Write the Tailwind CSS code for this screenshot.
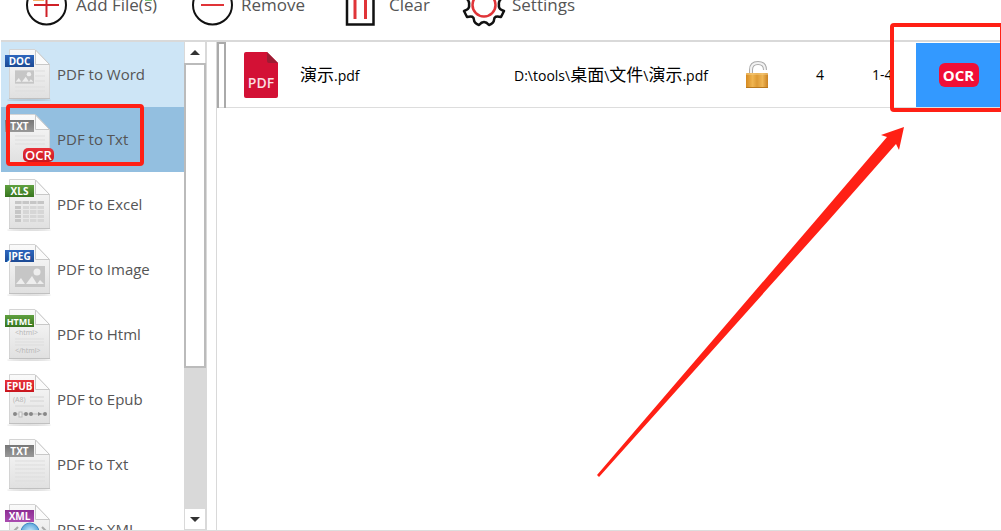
<!DOCTYPE html>
<html lang="en">
<head>
  <meta charset="UTF-8" />
  <meta name="viewport" content="width=device-width, initial-scale=1" />
  <title>PDF Converter</title>
  <script src="https://cdn.jsdelivr.net/npm/@tailwindcss/browser@4"></script>
</head>
<body class="relative h-screen overflow-hidden flex flex-col bg-white text-[#555] text-[15px] font-['Open_Sans','Noto_Sans_CJK_SC',sans-serif]">

  <!-- Shared shapes -->
  <svg class="absolute w-0 h-0" aria-hidden="true">
    <defs>
      <linearGradient id="paper" x1="0" y1="0" x2="0" y2="1"><stop offset="0" stop-color="#fafafa" /><stop offset="1" stop-color="#e0e0e0" /></linearGradient>
      <linearGradient id="blue" x1="0" y1="0" x2="0" y2="1"><stop offset="0" stop-color="#2d66bd" /><stop offset="1" stop-color="#1c4a94" /></linearGradient>
      <linearGradient id="green" x1="0" y1="0" x2="0" y2="1"><stop offset="0" stop-color="#5fa03f" /><stop offset="1" stop-color="#37751f" /></linearGradient>
      <linearGradient id="gray" x1="0" y1="0" x2="0" y2="1"><stop offset="0" stop-color="#777" /><stop offset="1" stop-color="#999" /></linearGradient>
      <linearGradient id="red" x1="0" y1="0" x2="0" y2="1"><stop offset="0" stop-color="#e8323a" /><stop offset="1" stop-color="#c9151d" /></linearGradient>
      <linearGradient id="purple" x1="0" y1="0" x2="0" y2="1"><stop offset="0" stop-color="#8c2d92" /><stop offset="1" stop-color="#ab4cb0" /></linearGradient>
      <linearGradient id="gold" x1="0" y1="0" x2="1" y2="0"><stop offset="0" stop-color="#d68a20" /><stop offset="0.3" stop-color="#f0b550" /><stop offset="0.5" stop-color="#dd9a34" /><stop offset="0.75" stop-color="#efb655" /><stop offset="1" stop-color="#c98122" /></linearGradient>
      <radialGradient id="globe"><stop offset="0" stop-color="#d4efff" /><stop offset="1" stop-color="#5ba6dc" /></radialGradient>
      <symbol id="page" viewBox="0 0 48 52">
        <ellipse cx="25" cy="51" rx="22" ry="1" fill="#000" opacity="0.12" />
        <path d="M5.500 .5H31L45.500 15.500V49.500H5.500Z" fill="url(#paper)" stroke="#d4d4d4" />
        <path d="M5 49.500H46" stroke="#c0c0c0" />
        <path d="M31.500 1V15.500H45.500Z" fill="#fbfbfb" stroke="#c8c8c8" />
      </symbol>
      <symbol id="picture" viewBox="0 0 30 21">
        <path d="M0 0H30V21H0Z" fill="#c6c6c6" />
        <circle cx="22" cy="6" r="3.500" fill="#eee" />
        <path d="M1 18L6 12L10 18ZM11 18L17 10L22 18ZM22 18L25 14L29 18Z" fill="#eee" />
      </symbol>
    </defs>
  </svg>

  <!-- Toolbar -->
  <header class="h-10 shrink-0 overflow-hidden flex items-end pb-[14px] pl-[26px] gap-[34px] text-[17px]">
    <button class="h-[42px] flex items-center gap-2">
      <svg class="size-[42px] overflow-visible" viewBox="0 0 42 42" fill="none">
        <circle cx="20.500" cy="21" r="19.500" stroke="#111" stroke-width="2" />
        <path d="M8 21H33M20.500 8V33" stroke="#cf2027" stroke-width="2" />
        <path d="M7 16H18" stroke="#f5b067" stroke-width="2" />
        <path d="M119 16H126" stroke="#7cc576" stroke-width="2" />
      </svg>
      Add File(s)
    </button>
    <button class="h-[42px] flex items-center gap-2">
      <svg class="size-[42px]" viewBox="0 0 42 42" fill="none">
        <circle cx="21.500" cy="21" r="19.500" stroke="#111" stroke-width="2" />
        <path d="M10 21H33" stroke="#e03438" stroke-width="2" />
      </svg>
      Remove
    </button>
    <button class="h-[42px] flex items-center gap-[14px]">
      <svg class="w-9 h-[42px]" viewBox="0 0 36 42" fill="none">
        <path d="M8 3V40.500H34.500V3" stroke="#111" stroke-width="2.500" />
        <path d="M16 6V35M26.500 6V35" stroke="#e03438" stroke-width="3" />
      </svg>
      Clear
    </button>
    <button class="h-[42px] flex items-center gap-2">
      <svg class="w-10 h-[42px] overflow-visible" viewBox="1 0 40 42" fill="none">
        <path d="M17 1Q21 6 25 1L30 3Q30 10 36 8L40 13Q35 17 36 21Q35 25 41 27L38 33Q31 31 31 36Q31 39 26 41Q21 35 16 41Q11 39 11 36Q11 31 4 33L1 27Q7 25 6 21Q7 17 2 13L6 8Q12 10 12 3Z" stroke="#111" stroke-width="2.500" stroke-linejoin="round" />
        <circle cx="21" cy="21" r="11.500" stroke="#e03438" stroke-width="2.500" />
      </svg>
      Settings
    </button>
  </header>

  <main class="flex-1 min-h-0 flex border-b border-[#ddd]">

    <!-- Output formats -->
    <div class="w-[206px] shrink-0 ml-px flex border-t-2 border-r border-[#d9d9d9]">
      <nav class="flex-1 min-w-0 overflow-hidden">
        <a href="#word" class="h-[65px] pl-[3px] flex items-center gap-[5px] bg-[#cde5f6]">
          <svg class="w-12 h-[52px]" viewBox="0 0 48 52">
            <use href="#page" />
            <use href="#picture" x="11" y="21" width="19" height="14" />
            <path d="M31 22H41M31 27H41M31 32H41M11 38H41M11 42H41" stroke="#ddd" />
            <path d="M1 6H30V18H1Z" fill="url(#blue)" />
            <text x="15.500" y="16" text-anchor="middle" font-size="10" font-weight="700" fill="#fff">DOC</text>
          </svg>
          PDF to Word
        </a>
        <a href="#txt-ocr" class="h-[65px] pl-[3px] flex items-center gap-[5px] bg-[#93bfe0]">
          <svg class="w-12 h-[52px] overflow-visible" viewBox="0 0 48 52">
            <use href="#page" />
            <path d="M11 22H41M11 26H41M11 30H41" stroke="#ddd" />
            <path d="M1 6H30V18H1Z" fill="url(#gray)" />
            <text x="15.500" y="16" text-anchor="middle" font-size="10" font-weight="700" fill="#fff">TXT</text>
            <rect x="19" y="34" width="31" height="14" rx="5" fill="url(#red)" />
            <text x="34.500" y="46" text-anchor="middle" font-size="13" font-weight="600" fill="#fff">OCR</text>
          </svg>
          PDF to Txt
        </a>
        <a href="#excel" class="h-[65px] pl-[3px] flex items-center gap-[5px]">
          <svg class="w-12 h-[52px]" viewBox="0 0 48 52">
            <use href="#page" />
            <path d="M11 22H40V25H11ZM11 27H17V43H11Z" fill="#c6c6c6" />
            <path d="M19 27H40V43H19Z" fill="#d6d6d6" />
            <path d="M11 30.500H40M11 35.500H40M11 39.500H40M18 22V43M25.500 22V43M33 22V43" stroke="#e8e8e8" />
            <path d="M1 6H30V18H1Z" fill="url(#green)" />
            <text x="15.500" y="16" text-anchor="middle" font-size="10" font-weight="700" fill="#fff">XLS</text>
          </svg>
          PDF to Excel
        </a>
        <a href="#image" class="h-[65px] pl-[3px] flex items-center gap-[5px]">
          <svg class="w-12 h-[52px]" viewBox="0 0 48 52">
            <use href="#page" />
            <use href="#picture" x="11" y="22" width="30" height="21" />
            <path d="M1 6H30V18H1Z" fill="url(#blue)" />
            <text x="15.500" y="16" text-anchor="middle" font-size="10" font-weight="700" fill="#fff">JPEG</text>
          </svg>
          PDF to Image
        </a>
        <a href="#html" class="h-[65px] pl-[3px] flex items-center gap-[5px]">
          <svg class="w-12 h-[52px]" viewBox="0 0 48 52">
            <use href="#page" />
            <text x="11" y="26" font-size="7" fill="#b5b5b5">&lt;html&gt;</text>
            <path d="M11 30H40M11 33H40M11 36H40" stroke="#ddd" />
            <text x="11" y="44" font-size="7" fill="#b5b5b5">&lt;/html&gt;</text>
            <path d="M1 6H30V18H1Z" fill="url(#green)" />
            <text x="15.500" y="16" text-anchor="middle" font-size="9" font-weight="700" fill="#fff">HTML</text>
          </svg>
          PDF to Html
        </a>
        <a href="#epub" class="h-[65px] pl-[3px] flex items-center gap-[5px]">
          <svg class="w-12 h-[52px]" viewBox="0 0 48 52">
            <use href="#page" />
            <text x="9" y="28" font-size="7" fill="#b5b5b5">(A8)</text>
            <path d="M26 23H40M26 27H40M11 32H40" stroke="#d4d4d4" />
            <path d="M13 40H41" stroke="#bbb" />
            <g fill="#888"><circle cx="11" cy="40" r="2" /><circle cx="22" cy="40" r="2" /><circle cx="27" cy="40" r="2" /><circle cx="41" cy="40" r="2" /><path d="M34 38L38 40L34 42Z" /></g>
            <rect x="15" y="38" width="3" height="5" fill="#eee" stroke="#bbb" />
            <path d="M1 6H30V18H1Z" fill="url(#red)" />
            <text x="15.500" y="16" text-anchor="middle" font-size="10" font-weight="700" fill="#fff">EPUB</text>
          </svg>
          PDF to Epub
        </a>
        <a href="#txt" class="h-[65px] pl-[3px] flex items-center gap-[5px]">
          <svg class="w-12 h-[52px]" viewBox="0 0 48 52">
            <use href="#page" />
            <path d="M11 22H41M11 26H41M11 30H41M11 34H41M11 38H41M11 42H41" stroke="#ddd" />
            <path d="M1 6H30V18H1Z" fill="url(#gray)" />
            <text x="15.500" y="16" text-anchor="middle" font-size="10" font-weight="700" fill="#fff">TXT</text>
          </svg>
          PDF to Txt
        </a>
        <a href="#xml" class="h-[65px] pl-[3px] flex items-center gap-[5px]">
          <svg class="w-12 h-[52px]" viewBox="0 0 48 52">
            <use href="#page" />
            <circle cx="26" cy="28" r="9" fill="url(#globe)" stroke="#3d87c2" />
            <path d="M14 23L9 28L14 33M38 23L43 28L38 33" fill="none" stroke="#aaa" stroke-width="2" />
            <path d="M1 6H30V18H1Z" fill="url(#purple)" />
            <text x="15.500" y="16" text-anchor="middle" font-size="10" font-weight="700" fill="#fff">XML</text>
          </svg>
          PDF to XML
        </a>
      </nav>
      <!-- Scrollbar -->
      <div class="w-[22px] shrink-0 flex flex-col bg-[#d9d9d9] pb-px">
        <button aria-label="Scroll up" class="h-[21px] mx-px bg-white flex items-center justify-center">
          <svg class="w-2.5 h-[5px]" viewBox="0 0 10 5"><path d="M0 5L5 0L10 5Z" fill="#333" /></svg>
        </button>
        <div class="basis-[305px] border-2 border-[#bbb] bg-white"></div>
        <div class="flex-1"></div>
        <button aria-label="Scroll down" class="h-5 mx-px bg-white flex items-center justify-center">
          <svg class="w-2.5 h-[5px]" viewBox="0 0 10 5"><path d="M0 0L5 5L10 0Z" fill="#333" /></svg>
        </button>
      </div>
    </div>

    <div class="w-[9px] shrink-0 border-t-2 border-[#d9d9d9]"></div>

    <!-- File list -->
    <div class="flex-1 min-w-0 border-t-2 border-l border-[#d9d9d9]">
      <table class="w-full table-fixed text-black text-sm">
        <tbody>
          <tr class="h-16 border-b border-[#ddd]">
            <td class="w-[7px] border-2 border-b-0 border-[#aaa]"></td>
            <td class="w-[75px] pl-[18px]">
              <svg class="w-[34px] h-[46px]" viewBox="0 0 34 46">
                <path d="M2 0H23L34 11V44Q34 46 32 46H2Q0 46 0 44V2Q0 0 2 0Z" fill="#d31135" />
                <path d="M23 0L34 11H25Q23 11 23 9Z" fill="#9c1c33" />
                <text x="17" y="36" text-anchor="middle" font-size="14" font-weight="600" fill="#fbdde0">PDF</text>
              </svg>
            </td>
            <td class="w-[214px] whitespace-nowrap"><span class="text-[17px]">演示</span>.pdf</td>
            <td class="whitespace-nowrap">D:\tools\<span class="text-[17px]">桌面</span>\<span class="text-[17px]">文件</span>\<span class="text-[17px]">演示</span>.pdf</td>
            <td class="w-[58px]">
              <svg class="w-[22px] h-[27px] mx-auto" viewBox="0 0 22 27" fill="none">
                <path d="M5 13V9Q5 2 12 2Q19 2 19 9" stroke="#aaa" stroke-width="4" />
                <path d="M5 13V9Q5 2 12 2Q19 2 19 9" stroke="#f2f2f2" stroke-width="2" />
                <rect y="12" width="22" height="15" rx="1" fill="url(#gold)" />
                <path d="M0 13H22" stroke="#f6cd83" /><path d="M0 26.500H22" stroke="#b8781d" />
              </svg>
            </td>
            <td class="w-[68px] text-center">4</td>
            <td class="w-[62px] pl-[18px]">1-4</td>
            <td class="w-[85px] bg-[#3399ff] text-center">
              <button class="w-10 h-6 rounded-md bg-[#f00f37] text-white text-[15px] leading-6 font-bold">OCR</button>
            </td>
          </tr>
        </tbody>
      </table>
    </div>
  </main>

  <!-- Callouts -->
  <div class="absolute left-1.5 top-[104px] w-[138px] h-[62px] border-4 border-[#ff2015] rounded pointer-events-none"></div>
  <div class="absolute right-[-3px] top-[23px] w-[114px] h-[89px] border-4 border-[#ff2015] rounded pointer-events-none"></div>
  <svg class="absolute right-[95px] top-[125px] w-[310px] h-[355px] pointer-events-none" viewBox="0 0 310 355">
    <path d="M308 2L285 10L291 12L220 95L1 350L3 352L233 95L300 19L303 25Z" fill="#ff2015" />
  </svg>

</body>
</html>
